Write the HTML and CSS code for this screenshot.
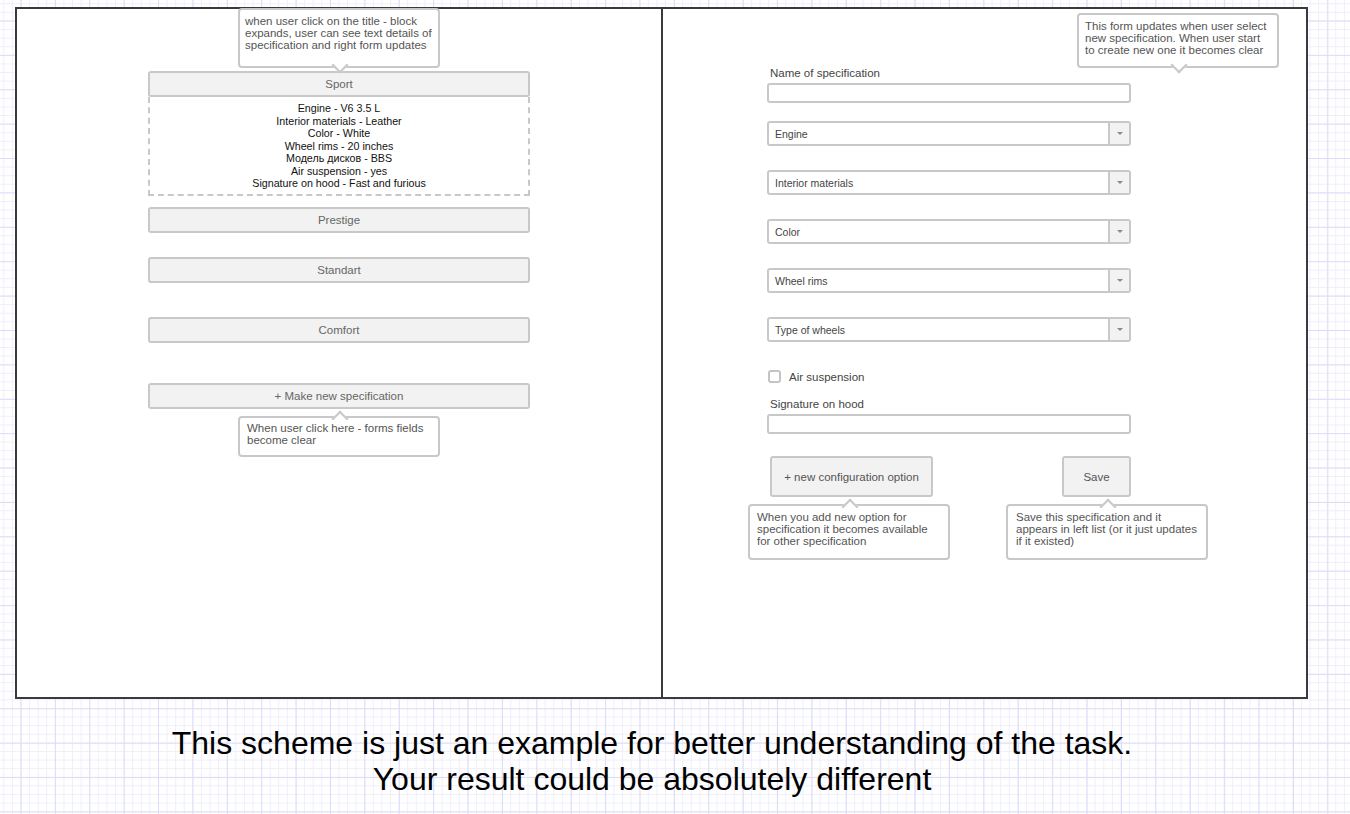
FILE: index.html
```html
<!DOCTYPE html>
<html lang="en">
<head>
<meta charset="utf-8">
<title>Specification scheme</title>
<link rel="stylesheet" href="styles.css">
</head>
<body>
<div class="frame">
  <section class="panel panel-left">
    <div class="spec-list">
      <div class="spec-item">
        <div class="tip tip-down tip-title">when user click on the title - block<br>expands, user can see text details of<br>specification and right form updates</div>
        <div class="spec-btn">Sport</div>
        <div class="spec-details">
          <div>Engine - V6 3.5 L</div>
          <div>Interior materials - Leather</div>
          <div>Color - White</div>
          <div>Wheel rims - 20 inches</div>
          <div>Модель дисков - BBS</div>
          <div>Air suspension - yes</div>
          <div>Signature on hood - Fast and furious</div>
        </div>
      </div>
      <div class="spec-btn gap-a">Prestige</div>
      <div class="spec-btn gap-b">Standart</div>
      <div class="spec-btn gap-c">Comfort</div>
      <div class="spec-item gap-d">
        <div class="spec-btn">+ Make new specification</div>
        <div class="tip tip-up tip-new">When user click here - forms fields<br>become clear</div>
      </div>
    </div>
  </section>
  <section class="panel panel-right">
    <div class="tip tip-down tip-form">This form updates when user select<br>new specification. When user start<br>to create new one it becomes clear</div>
    <div class="spec-form">
      <div class="field-label">Name of specification</div>
      <div class="text-input"></div>
      <div class="selects">
        <div class="select"><span class="select-value">Engine</span><span class="select-arrow"><i class="caret"></i></span></div>
        <div class="select"><span class="select-value">Interior materials</span><span class="select-arrow"><i class="caret"></i></span></div>
        <div class="select"><span class="select-value">Color</span><span class="select-arrow"><i class="caret"></i></span></div>
        <div class="select"><span class="select-value">Wheel rims</span><span class="select-arrow"><i class="caret"></i></span></div>
        <div class="select"><span class="select-value">Type of wheels</span><span class="select-arrow"><i class="caret"></i></span></div>
      </div>
      <div class="check-row"><span class="checkbox"></span><span class="check-label">Air suspension</span></div>
      <div class="field-label sig-label">Signature on hood</div>
      <div class="text-input"></div>
      <div class="actions">
        <div class="action">
          <div class="action-btn btn-option">+ new configuration option</div>
          <div class="tip tip-up tip-option">When you add new option for<br>specification it becomes available<br>for other specification</div>
        </div>
        <div class="action">
          <div class="action-btn btn-save">Save</div>
          <div class="tip tip-up tip-save">Save this specification and it<br>appears in left list (or it just updates<br>if it existed)</div>
        </div>
      </div>
    </div>
  </section>
</div>
<p class="note">This scheme is just an example for better understanding of the task.<br>Your result could be absolutely different</p>
</body>
</html>
```

FILE: styles.css
```css
* { box-sizing: border-box; }

html, body { margin: 0; padding: 0; }

body {
  width: 1350px;
  height: 814px;
  overflow: hidden;
  font-family: "Liberation Sans", Arial, sans-serif;
  background-color: #ffffff;
  background-image:
    linear-gradient(to right, #dddcf8 1px, transparent 1px),
    linear-gradient(to bottom, #dddcf8 1px, transparent 1px),
    linear-gradient(to right, #efeefc 1px, transparent 1px),
    linear-gradient(to bottom, #efeefc 1px, transparent 1px);
  background-size: 34.4px 34.4px, 34.4px 34.4px, 8.6px 8.6px, 8.6px 8.6px;
  background-position: 20.5px 20.5px, 20.5px 20.5px, 3.3px 3.3px, 3.3px 3.3px;
}

.frame {
  margin: 7px 0 0 15px;
  width: 1293px;
  height: 692px;
  border: 2px solid #3a3a3a;
  background: #ffffff;
  display: flex;
}

.panel { position: relative; }

.panel-left {
  width: 646px;
  border-right: 2px solid #3a3a3a;
  padding-top: 62px;
  display: flex;
  justify-content: center;
}

.panel-right {
  flex: 1;
  padding: 57px 0 0 104px;
}

/* ---------- left list ---------- */
.spec-list {
  width: 382px;
  display: flex;
  flex-direction: column;
}

.spec-item { position: relative; }

.spec-btn {
  height: 26px;
  background: #f2f2f2;
  border: 2px solid #c8c8c8;
  border-radius: 3px;
  display: flex;
  align-items: center;
  justify-content: center;
  font-size: 11.5px;
  color: #666666;
}

.spec-details {
  height: 99px;
  border: 2px dashed #c8c8c8;
  border-top: none;
  padding-top: 5px;
  text-align: center;
  font-size: 10.7px;
  line-height: 12.5px;
  color: #111111;
}

.gap-a { margin-top: 11px; }
.gap-b { margin-top: 24px; }
.gap-c { margin-top: 34px; }
.gap-d { margin-top: 40px; }

/* ---------- tooltips ---------- */
.tip {
  position: absolute;
  width: 202px;
  background: #ffffff;
  border: 2px solid #c8c8c8;
  border-radius: 4px;
  padding: 6px 3px 0 5px;
  font-size: 11.5px;
  line-height: 11.8px;
  color: #555555;
  white-space: nowrap;
  z-index: 2;
}

.tip::after {
  content: "";
  position: absolute;
  left: 50%;
  width: 10px;
  height: 10px;
  margin-left: -5px;
  background: #ffffff;
  transform: rotate(45deg);
}

.tip-down::after {
  bottom: -5px;
  border-right: 2px solid #c8c8c8;
  border-bottom: 2px solid #c8c8c8;
}

.tip-up::after {
  top: -5px;
  border-left: 2px solid #c8c8c8;
  border-top: 2px solid #c8c8c8;
}

.tip-title { left: 90px; top: -63px; height: 60px; }
.tip-new { left: 90px; top: 33px; height: 41px; padding-top: 5px; padding-left: 7px; }
.tip-form { left: 414px; top: 4px; height: 55px; padding-left: 6px; }
.tip-option { left: -22px; top: 48px; height: 56px; padding-top: 6px; padding-left: 7px; }
.tip-save { left: -56px; top: 48px; height: 56px; padding-top: 6px; padding-left: 8px; }

/* ---------- right form ---------- */
.spec-form { width: 364px; }

.field-label {
  margin-left: 3px;
  font-size: 11.5px;
  line-height: 14px;
  color: #444444;
}

.text-input {
  margin-top: 3px;
  height: 20px;
  background: #ffffff;
  border: 2px solid #c8c8c8;
  border-radius: 3px;
}

.selects {
  margin-top: 18px;
  display: flex;
  flex-direction: column;
  gap: 24px;
}

.select {
  height: 25px;
  display: flex;
  border: 2px solid #c8c8c8;
  border-radius: 3px;
  background: #ffffff;
  overflow: hidden;
}

.select-value {
  flex: 1;
  display: flex;
  align-items: center;
  padding-left: 6px;
  font-size: 10.5px;
  color: #444444;
}

.select-arrow {
  width: 21px;
  border-left: 2px solid #c8c8c8;
  background: #f2f2f2;
  display: flex;
  align-items: center;
  justify-content: center;
}

.caret {
  width: 0;
  height: 0;
  border-left: 3px solid transparent;
  border-right: 3px solid transparent;
  border-top: 3px solid #8a8a8a;
}

.check-row {
  margin-top: 28px;
  height: 13px;
  display: flex;
  align-items: center;
  gap: 8px;
  padding-left: 1px;
}

.checkbox {
  width: 13px;
  height: 13px;
  border: 2px solid #c4c4c4;
  border-radius: 3px;
  background: #ffffff;
}

.check-label {
  font-size: 11.5px;
  color: #444444;
}

.sig-label { margin-top: 14px; }

.actions {
  margin-top: 22px;
  padding-left: 3px;
  display: flex;
  justify-content: space-between;
}

.action { position: relative; }

.action-btn {
  height: 41px;
  background: #f2f2f2;
  border: 2px solid #c8c8c8;
  border-radius: 3px;
  display: flex;
  align-items: center;
  justify-content: center;
  font-size: 11.5px;
  color: #555555;
}

.btn-option { width: 163px; }
.btn-save { width: 69px; }

/* ---------- note ---------- */
.note {
  margin: 26px 0 0;
  width: 1304px;
  text-align: center;
  font-size: 32px;
  line-height: 36px;
  color: #000000;
}
```
